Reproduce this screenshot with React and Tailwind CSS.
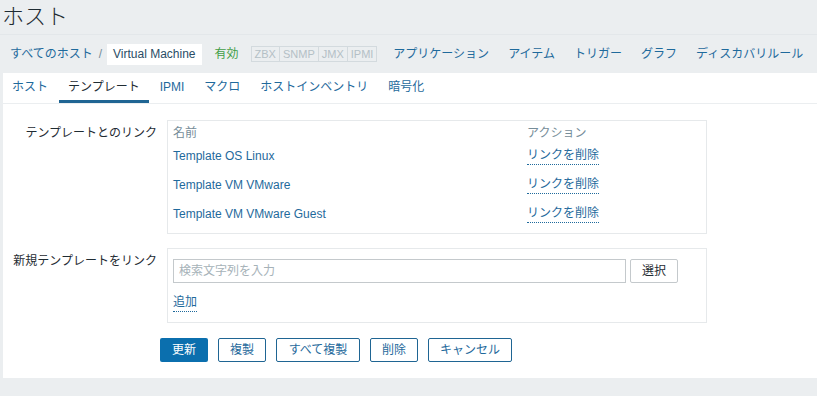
import React from "react";

const font = { fontFamily: '"Liberation Sans", "Noto Sans CJK JP", sans-serif' };

const navLinks = ["アプリケーション", "アイテム", "トリガー", "グラフ", "ディスカバリルール"];
const tabs = ["ホスト", "テンプレート", "IPMI", "マクロ", "ホストインベントリ", "暗号化"];
const templates = ["Template OS Linux", "Template VM VMware", "Template VM VMware Guest"];
const buttons = ["複製", "すべて複製", "削除", "キャンセル"];

const DottedLink = ({ children }) => (
  <span className="text-[#1f6a9c] border-b border-dotted border-[#1f6a9c] leading-[18px]">{children}</span>
);

export default function App() {
  return (
    <div className="w-[817px] h-[396px] overflow-hidden bg-[#ebeef0] text-[12px] text-[#1f2c33]" style={font}>
      {/* Page title */}
      <div className="h-[35px] flex items-center pl-[2px] border-b border-[#e3e7ea]">
        <h1 className="text-[22px] font-light leading-none text-[#1f2c33]">ホスト</h1>
      </div>

      {/* Breadcrumb / host navigation */}
      <div className="h-[38px] flex items-center pl-[10px] whitespace-nowrap">
        <span className="text-[#1f6a9c]">すべてのホスト</span>
        <span className="text-[#768d99] ml-[6px]">/</span>
        <span className="ml-[5px] h-[21px] px-[6px] flex items-center bg-white text-[#2a4d66]">Virtual Machine</span>
        <span className="ml-[13px] text-[#429e47]">有効</span>
        <div className="ml-[12px] flex text-[11px] text-[#b4c0c6] border border-[#d3dade] h-[16px] leading-[14px]">
          <span className="px-[3px] border-r border-[#d3dade]">ZBX</span>
          <span className="px-[3px] border-r border-[#d3dade]">SNMP</span>
          <span className="px-[3px] border-r border-[#d3dade]">JMX</span>
          <span className="px-[3px]">IPMI</span>
        </div>
        <div className="ml-[16px] flex gap-[19px] text-[#1f6a9c]">
          {navLinks.map((l) => (
            <span key={l}>{l}</span>
          ))}
        </div>
      </div>

      {/* Content card */}
      <div className="ml-[3px] w-[830px] h-[305px] bg-white">
        <div className="h-[31px] flex items-stretch gap-[2px] border-b border-[#ebeef0]">
          {tabs.map((t, i) => (
            <div
              key={t}
              className={`px-[9px] flex items-center border-b-[3px] ${
                i === 1 ? "border-[#1f6593] text-[#1f2c33]" : "border-transparent text-[#1f6a9c]"
              }`}
            >
              {t}
            </div>
          ))}
        </div>

        <div className="pt-[16px]">
          {/* Linked templates */}
          <div className="flex">
            <div className="w-[154px] text-right pt-[4px]">テンプレートとのリンク</div>
            <div className="ml-[10px] w-[540px] border border-[#e6e9eb] px-[5px] pb-[5px]">
              <div className="h-[20px] pt-[3px] flex items-center text-[#768d99]">
                <div className="w-[354px]">名前</div>
                <div>アクション</div>
              </div>
              {templates.map((t) => (
                <div key={t} className="h-[29px] flex items-center">
                  <div className="w-[354px] text-[#1f6a9c]">{t}</div>
                  <DottedLink>リンクを削除</DottedLink>
                </div>
              ))}
            </div>
          </div>

          {/* New template link */}
          <div className="flex mt-[14px]">
            <div className="w-[154px] text-right pt-[4px]">新規テンプレートをリンク</div>
            <div className="ml-[10px] w-[540px] border border-[#e6e9eb] px-[5px] pt-[10px] pb-[10px]">
              <div className="flex gap-[4px]">
                <div className="w-[453px] h-[24px] border border-[#c4c9cc] flex items-center px-[5px] text-[#a6b2b8]">
                  検索文字列を入力
                </div>
                <div className="w-[48px] h-[24px] border border-[#c4c9cc] rounded-[2px] flex items-center justify-center">
                  選択
                </div>
              </div>
              <div className="mt-[10px] h-[19px] flex items-center">
                <DottedLink>追加</DottedLink>
              </div>
            </div>
          </div>

          {/* Form buttons */}
          <div className="flex gap-[10px] ml-[157px] mt-[15px]">
            <div className="w-[48px] h-[24px] rounded-[2px] bg-[#0b6fae] text-white flex items-center justify-center">
              更新
            </div>
            {buttons.map((b) => (
              <div
                key={b}
                className={`${b.length > 2 ? "w-[84px]" : "w-[48px]"} h-[24px] rounded-[2px] border border-[#1f6593] text-[#1f6a9c] flex items-center justify-center`}
              >
                {b}
              </div>
            ))}
          </div>
        </div>
      </div>
    </div>
  );
}
